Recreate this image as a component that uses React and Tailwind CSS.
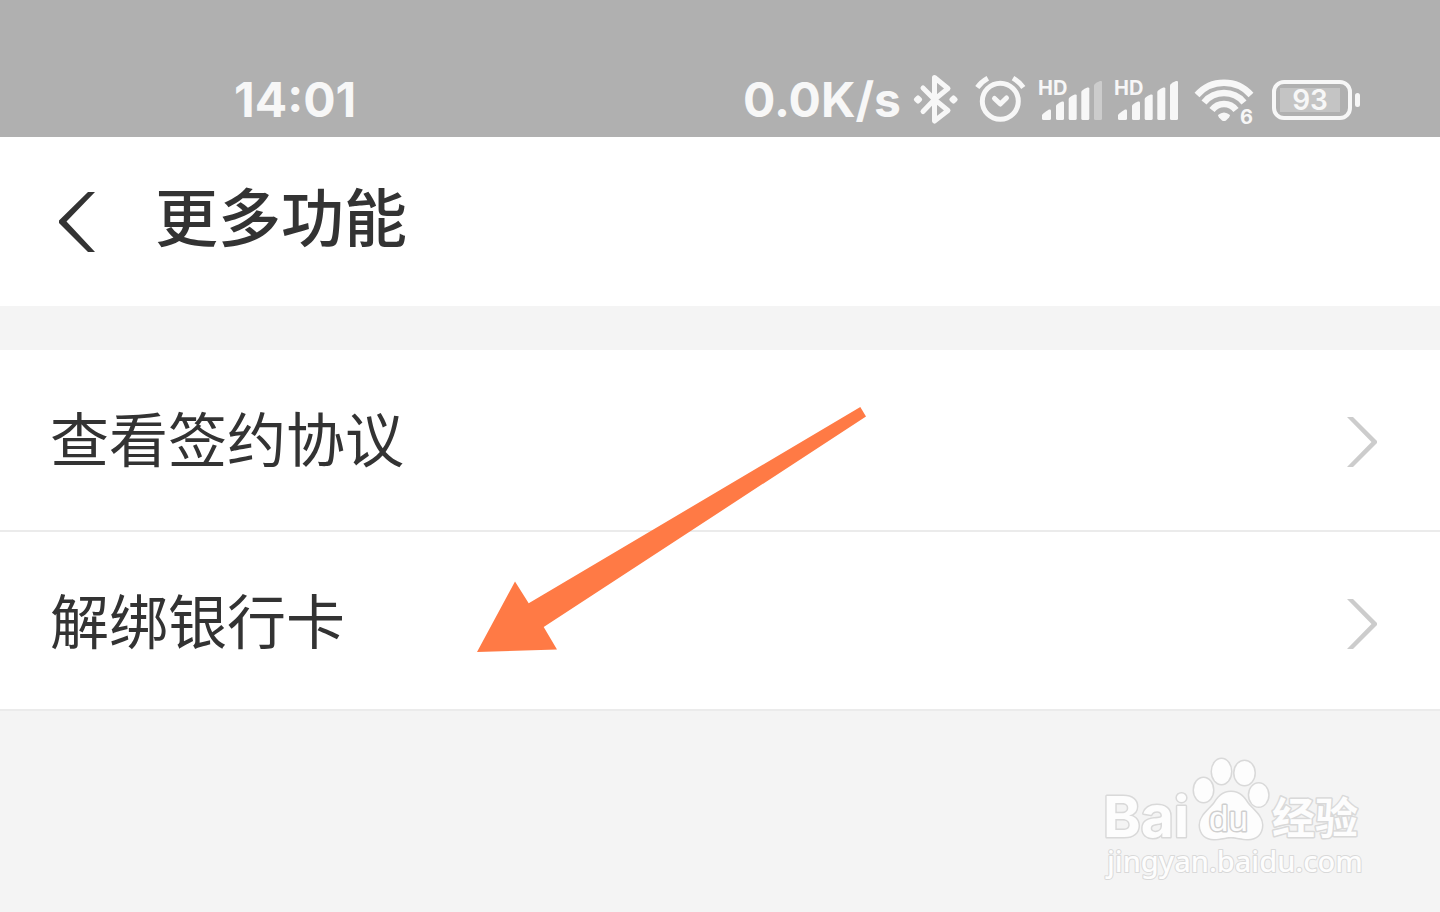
const rows = [
  { id: "agreement", label: "查看签约协议" },
  { id: "unbind", label: "解绑银行卡" },
];

function BluetoothIcon() {
  return (
    <svg width="46" height="60" viewBox="0 0 46 60" fill="none" aria-hidden="true">
      <path
        d="M10 18 21.5 29.5 35 40.5 21.5 51V7.5L35 18.5 21.5 29.5 10 41.5"
        stroke="currentColor"
        strokeWidth="5"
        strokeLinecap="round"
        strokeLinejoin="round"
      />
      <rect x="1.5" y="26" width="7" height="7" rx="2" transform="rotate(45 5 29.5)" fill="currentColor" />
      <rect x="37" y="26" width="7" height="7" rx="2" transform="rotate(45 40.5 29.5)" fill="currentColor" />
    </svg>
  );
}

function AlarmIcon() {
  return (
    <svg
      width="55"
      height="60"
      viewBox="0 0 55 60"
      fill="none"
      stroke="currentColor"
      strokeWidth="5"
      strokeLinecap="round"
      strokeLinejoin="round"
      aria-hidden="true"
    >
      <circle cx="29.3" cy="31.3" r="18" />
      <path d="M23.5 28.5 29.3 34 35.5 28" />
      <g strokeLinecap="butt">
        <path d="M6.3 17.5Q10 12 16.8 8.2M42 8.2Q48.5 12 52.3 17.5" />
      </g>
    </svg>
  );
}

function SignalIcon({ weak }) {
  return (
    <svg width="64" height="60" viewBox="0 0 64 60" fill="currentColor" aria-hidden="true">
      <text x="0" y="25" className="font-['Inter',sans-serif] text-[20px] font-bold">
        HD
      </text>
      <path d="M4 45q1-2 7-5.500q2-.5 2 1V48.500q0 1.500-1.500 1.500H5.500Q4 50 4 48.500Z" />
      <path d="M18 36q0-2 6-4.500q2-.5 2 1V48.500q0 1.500-1.500 1.500H19.500Q18 50 18 48.500Z" />
      <path d="M30.700 29q0-2 6-4.500q2-.5 2 1V48.500q0 1.500-1.500 1.500H32.200Q30.700 50 30.700 48.500Z" />
      <path d="M43.300 22q0-2 6-4.500q2-.5 2 1V48.500q0 1.500-1.500 1.500H44.800Q43.300 50 43.300 48.500Z" />
      <path
        opacity={weak ? 0.4 : 1}
        d="M56 15.500q0-2 6-4.500q2-.5 2 1V48.500q0 1.500-1.500 1.500H57.500Q56 50 56 48.500Z"
      />
    </svg>
  );
}

function WifiIcon() {
  return (
    <svg width="68" height="60" viewBox="0 0 68 60" aria-hidden="true">
      <g fill="none" stroke="currentColor" strokeWidth="6.500">
        <path d="M7 25A36 36 0 0 1 61 25" />
        <path d="M14 32.500A26 26 0 0 1 54 32.500" />
        <path d="M22 40A15 15 0 0 1 46 40" />
      </g>
      <path fill="currentColor" d="M28 45Q34 40 40 45 40 47 36 50.500 34 51.500 32 50.500 28 47 28 45Z" />
      <text x="50" y="54" fill="currentColor" className="font-['Inter',sans-serif] text-[20px] font-bold">
        6
      </text>
    </svg>
  );
}

function Battery({ level }) {
  return (
    <div className="flex items-center gap-[3px] pl-0.5">
      <div className="flex h-10 w-20 rounded-xl border-4 border-[#f7f7f7] p-1">
        <span className="flex w-[60px] items-center justify-center bg-[#c4c4c4] text-[28px] leading-6 font-semibold">
          {level}
        </span>
      </div>
      <span className="h-3.5 w-[5px] rounded-sm bg-[#f7f7f7]" />
    </div>
  );
}

function StatusBar() {
  return (
    <div className="flex h-[137px] items-end justify-between bg-[#b0b0b0] pr-20 pb-[7px] pl-[234px] font-['Inter',sans-serif] text-[#f7f7f7]">
      <time className="text-[48px] leading-[60px] font-bold">14:01</time>
      <div className="flex items-center gap-3">
        <span className="text-[48px] leading-[60px] font-bold">0.0K/s</span>
        <BluetoothIcon />
        <AlarmIcon />
        <SignalIcon weak />
        <SignalIcon />
        <WifiIcon />
        <Battery level={93} />
      </div>
    </div>
  );
}

function Header() {
  return (
    <header className="flex h-[169px] items-center bg-white pl-[59px]">
      <button type="button" aria-label="返回" className="mr-[60px] text-[#333]">
        <svg width="36" height="60" viewBox="0 0 36 60" fill="currentColor" aria-hidden="true">
          <path d="M29 0H36L7.500 29.500 36 60H29L0 31V28.500Z" />
        </svg>
      </button>
      <h1 className="pb-4 text-[63px] leading-[68px] font-medium">更多功能</h1>
    </header>
  );
}

function Row({ id, label }) {
  return (
    <li className="border-b-2 border-[#ebebeb] pt-[50px] pb-[46px] last:pb-[43px]">
      <a href={`#${id}`} className="flex items-center justify-between pr-[63px] pl-[50px]">
        <span className="pb-2.5 text-[59px] leading-[74px]">{label}</span>
        <svg width="30" height="50" viewBox="0 0 30 50" className="text-[#ccc]" fill="currentColor" aria-hidden="true">
          <path d="M0 0H6L30 24V26L6 50H0L24.500 25Z" />
        </svg>
      </a>
    </li>
  );
}

// Callout arrow pointing at the unbind row
function Arrow() {
  return (
    <svg
      width="390"
      height="246"
      viewBox="0 0 390 246"
      className="pointer-events-none absolute top-[57px] left-[477px]"
      aria-hidden="true"
    >
      <path fill="#ff7a45" d="M0 245 38 174.500 51.700 196.300 383.300 0 389 9.500 66.700 220 80 242.500Z" />
    </svg>
  );
}

function Watermark() {
  return (
    <svg
      width="290"
      height="150"
      viewBox="0 0 290 150"
      className="absolute right-[60px] bottom-[22px]"
      fill="#fdfdfd"
      stroke="#d9d9d9"
      strokeWidth="3"
      strokeLinejoin="round"
      paintOrder="stroke"
      role="img"
      aria-label="Baidu 经验"
    >
      <text x="13" y="97" className="font-['Inter',sans-serif] text-[57px] font-bold">
        Bai
      </text>
      <ellipse cx="113.500" cy="50" rx="9.500" ry="12" />
      <ellipse cx="131.500" cy="31.500" rx="9.500" ry="12.500" />
      <ellipse cx="154.500" cy="33" rx="10" ry="12" />
      <ellipse cx="168.700" cy="55" rx="9.500" ry="11.500" />
      <path d="M141 52C150 52 154 58 158 64 163 70 172 76 172 85 172 94 166 99 158 99 151 99 147 97 141 97 135 97 131 99 124 99 116 99 110 94 110 85 110 76 119 70 124 64 128 58 132 52 141 52Z" />
      <text
        x="119"
        y="91"
        stroke="#cfcfcf"
        className="font-['Liberation_Sans',sans-serif] text-[35px]"
      >
        du
      </text>
      <text x="182" y="94" className="font-['Noto_Sans_CJK_SC',sans-serif] text-[43px] font-bold">
        经验
      </text>
      <text x="17" y="132" strokeWidth="2" className="font-['Noto_Sans',sans-serif] text-[29px] font-medium">
        jingyan.baidu.com
      </text>
    </svg>
  );
}

export default function App() {
  return (
    <div className="relative min-h-screen bg-[#f4f4f4] font-['Noto_Sans_CJK_SC',sans-serif] text-[#333]">
      <StatusBar />
      <Header />
      <main className="relative mt-11">
        <ul className="bg-white">
          {rows.map((row) => (
            <Row key={row.id} {...row} />
          ))}
        </ul>
        <Arrow />
      </main>
      <Watermark />
    </div>
  );
}
